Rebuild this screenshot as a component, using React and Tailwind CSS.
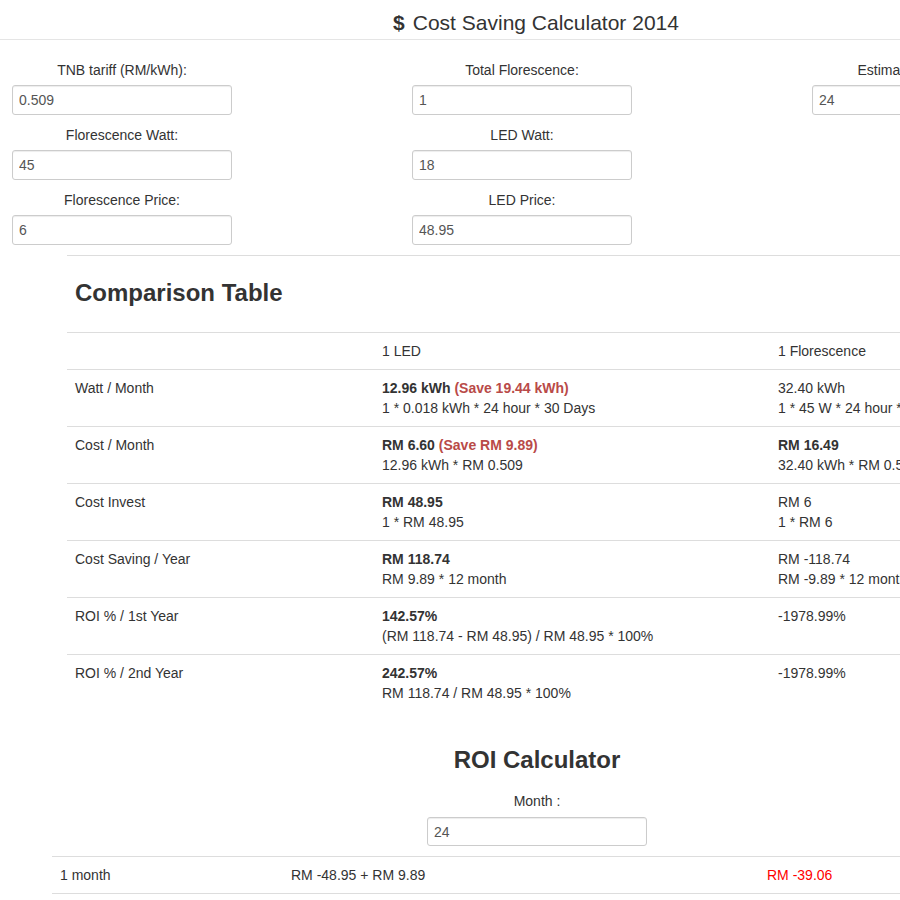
const rows = [
  {
    label: 'Watt / Month',
    led: [<><b>12.96 kWh</b> <b className="text-[#b94a48]">(Save 19.44 kWh)</b></>, '1 * 0.018 kWh * 24 hour * 30 Days'],
    flo: ['32.40 kWh', '1 * 45 W * 24 hour * 30 Days'],
  },
  {
    label: 'Cost / Month',
    led: [<><b>RM 6.60</b> <b className="text-[#b94a48]">(Save RM 9.89)</b></>, '12.96 kWh * RM 0.509'],
    flo: [<b>RM 16.49</b>, '32.40 kWh * RM 0.509'],
  },
  {
    label: 'Cost Invest',
    led: [<b>RM 48.95</b>, '1 * RM 48.95'],
    flo: ['RM 6', '1 * RM 6'],
  },
  {
    label: 'Cost Saving / Year',
    led: [<b>RM 118.74</b>, 'RM 9.89 * 12 month'],
    flo: ['RM -118.74', 'RM -9.89 * 12 month'],
  },
  {
    label: 'ROI % / 1st Year',
    led: [<b>142.57%</b>, '(RM 118.74 - RM 48.95) / RM 48.95 * 100%'],
    flo: ['-1978.99%'],
  },
  {
    label: 'ROI % / 2nd Year',
    led: [<b>242.57%</b>, 'RM 118.74 / RM 48.95 * 100%'],
    flo: ['-1978.99%'],
  },
];

function Field({ label, value }) {
  return (
    <div className="w-[220px] mb-[10px]">
      <label className="block text-center mb-[5px]">{label}</label>
      <input
        readOnly
        value={value}
        className="block w-full h-[30px] px-[6px] border border-[#ccc] rounded-[3px] text-[#555] shadow-[inset_0_1px_1px_rgba(0,0,0,0.075)] outline-none"
      />
    </div>
  );
}

function Lines({ items }) {
  return items.map((t, i) => <div key={i}>{t}</div>);
}

export default function App() {
  return (
    <div className="w-[900px] h-[900px] overflow-hidden bg-white text-[#333] text-sm leading-5 font-['Liberation_Sans',Arial,sans-serif]">
      <div className="w-[1200px]">
        {/* header */}
        <div className="w-[1072px] h-10 border-b border-[#e5e5e5] flex justify-center pt-[6px]">
          <h1 className="flex items-center gap-2 text-[21px] leading-6 font-normal">
            <span className="font-bold">$</span>
            <span>Cost Saving Calculator 2014</span>
          </h1>
        </div>

        {/* inputs */}
        <div className="grid grid-cols-[400px_400px_400px] pt-5">
          <div className="pl-3">
            <Field label="TNB tariff (RM/kWh):" value="0.509" />
            <Field label="Florescence Watt:" value="45" />
            <Field label="Florescence Price:" value="6" />
          </div>
          <div className="pl-3">
            <Field label="Total Florescence:" value="1" />
            <Field label="LED Watt:" value="18" />
            <Field label="LED Price:" value="48.95" />
          </div>
          <div className="pl-3">
            <Field label="Estimated Hour/Day:" value="24" />
          </div>
        </div>

        {/* comparison */}
        <div className="ml-[67px] w-[1100px] border-t border-[#ddd]">
          <h3 className="mt-6 mb-[26px] px-2 text-2xl leading-[26px] font-bold">Comparison Table</h3>
          <table className="w-full table-fixed border-collapse">
            <colgroup>
              <col className="w-[307px]" />
              <col className="w-[396px]" />
              <col />
            </colgroup>
            <thead>
              <tr>
                <th className="border-t border-b border-[#ddd] p-2 font-normal text-left"></th>
                <th className="border-t border-b border-[#ddd] p-2 font-normal text-left">1 LED</th>
                <th className="border-t border-b border-[#ddd] p-2 font-normal text-left">1 Florescence</th>
              </tr>
            </thead>
            <tbody>
              {rows.map((r) => (
                <tr key={r.label}>
                  <td className="border-t border-[#ddd] p-2 align-top">{r.label}</td>
                  <td className="border-t border-[#ddd] p-2 align-top whitespace-nowrap"><Lines items={r.led} /></td>
                  <td className="border-t border-[#ddd] p-2 align-top whitespace-nowrap"><Lines items={r.flo} /></td>
                </tr>
              ))}
            </tbody>
          </table>
        </div>

        {/* roi calculator */}
        <div className="ml-[52px] w-[970px]">
          <h3 className="mt-9 mb-[18px] text-center text-2xl leading-[26px] font-bold">ROI Calculator</h3>
          <div className="w-[220px] mx-auto">
            <label className="block text-center mb-[6px]">Month :</label>
            <input
              readOnly
              value="24"
              className="block w-full h-[29px] px-[6px] border border-[#ccc] rounded-[3px] text-[#555] shadow-[inset_0_1px_1px_rgba(0,0,0,0.075)] outline-none"
            />
          </div>
          <table className="w-full table-fixed border-collapse mt-[10px]">
            <colgroup>
              <col className="w-[231px]" />
              <col className="w-[476px]" />
              <col />
            </colgroup>
            <tbody>
              <tr>
                <td className="border-t border-b border-[#ddd] p-2">1 month</td>
                <td className="border-t border-b border-[#ddd] p-2">RM -48.95 + RM 9.89</td>
                <td className="border-t border-b border-[#ddd] p-2 text-[#ff0000]">RM -39.06</td>
              </tr>
            </tbody>
          </table>
        </div>
      </div>
    </div>
  );
}
